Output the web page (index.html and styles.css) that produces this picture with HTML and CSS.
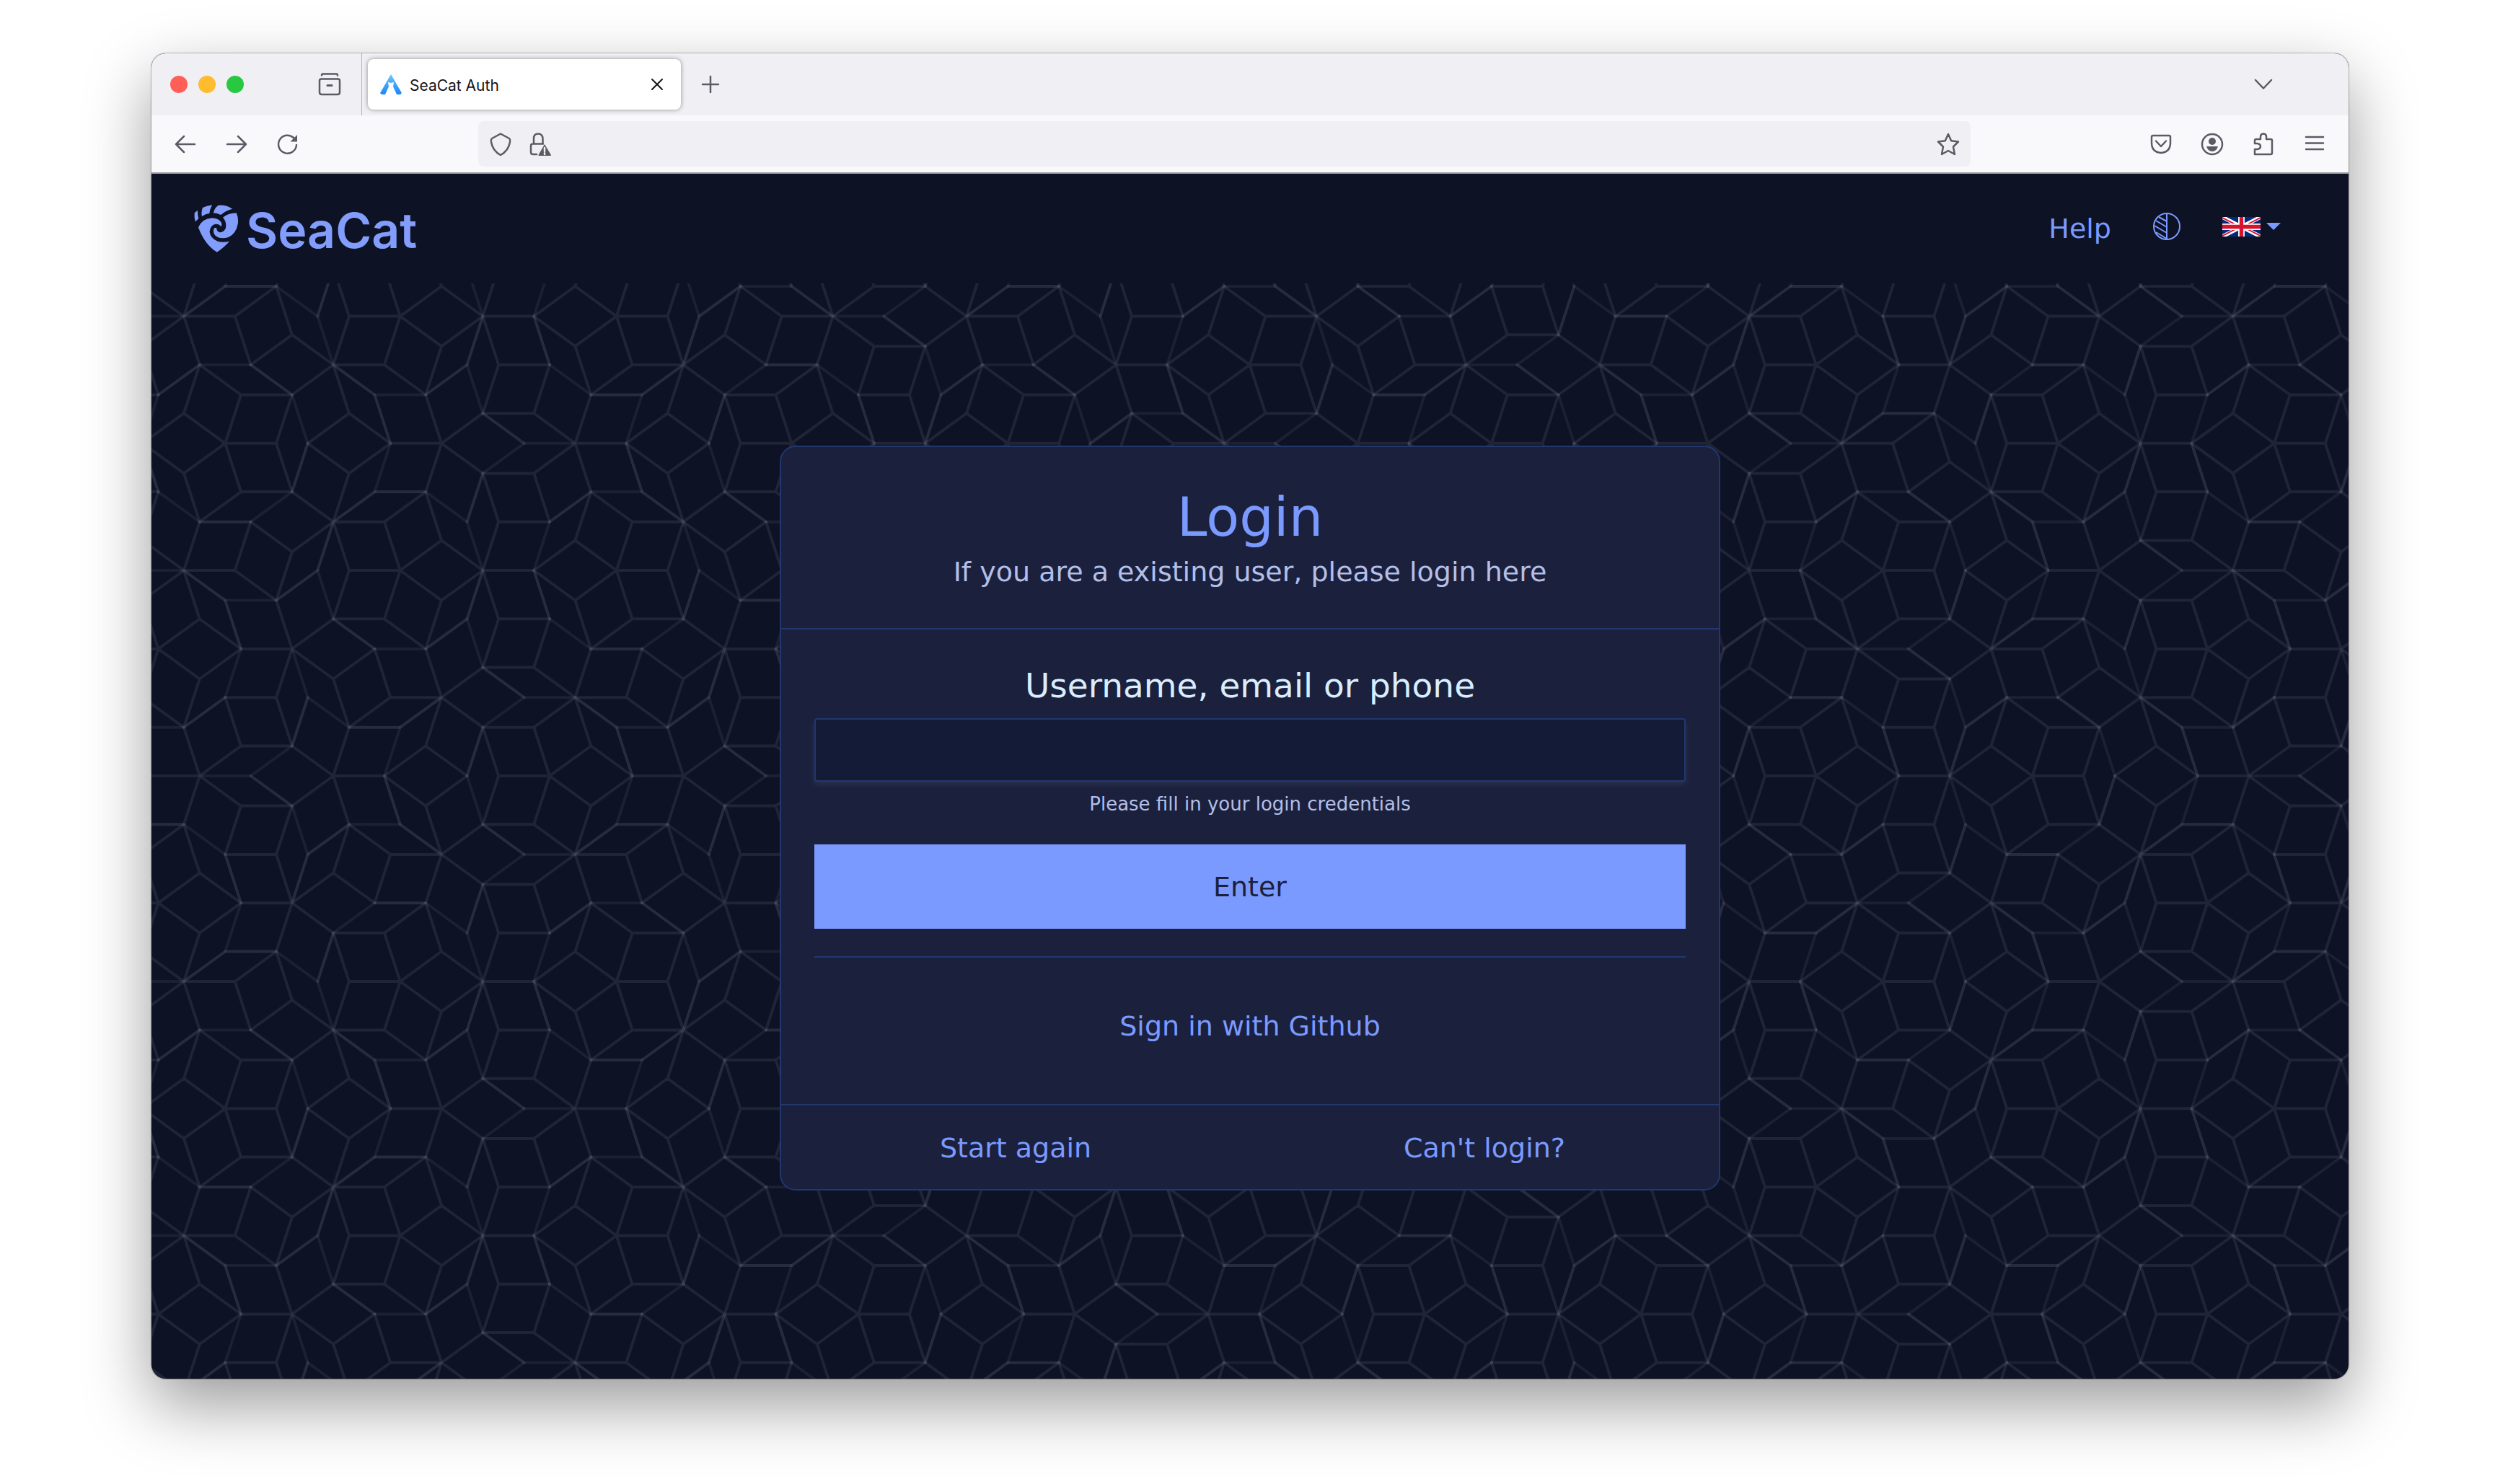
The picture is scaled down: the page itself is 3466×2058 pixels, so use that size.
FILE: index.html
```html
<!DOCTYPE html>
<html lang="en">
<head>
<meta charset="utf-8">
<title>SeaCat Auth</title>
<link rel="stylesheet" href="styles.css">
</head>
<body>
<div class="window">
  <div class="tabbar">
    <div class="lights"><span class="light red"></span><span class="light amber"></span><span class="light green"></span></div>
    <button class="tool view" aria-label="View"><svg class="icon" viewBox="0 0 32 32"><path d="M5 3.500Q5 1.500 7 1.500H25Q27 1.500 27 3.500M2 11Q2 8.500 4.500 8.500H27.500Q30 8.500 30 11V27Q30 30 27 30H5Q2 30 2 27Z"/><path d="M13 17.500H19" stroke-width="3"/></svg></button>
    <div class="tab">
      <svg class="favicon" viewBox="0 0 30 28"><defs><linearGradient id="fav" x1="0" y1="0" x2="0" y2="1"><stop offset="0" stop-color="#6cc6ff"/><stop offset="1" stop-color="#1b86f5"/></linearGradient></defs><path fill="url(#fav)" d="M15 0L30 26L28 28H23L18 17L19 11L15 12L11 11L12 17L7 28H2L0 26Z"/></svg>
      <span class="tab-title">SeaCat Auth</span>
      <button class="tool close" aria-label="Close tab"><svg class="icon dark" viewBox="0 0 32 32"><path d="M9 9L23 23M23 9L9 23"/></svg></button>
    </div>
    <button class="tool add" aria-label="New tab"><svg class="icon" viewBox="0 0 32 32"><path d="M16 5V27M5 16H27"/></svg></button>
    <button class="tool list" aria-label="List tabs"><svg class="icon" viewBox="0 0 32 32"><path d="M5 10L16 21.500L27 10"/></svg></button>
  </div>
  <div class="toolbar">
    <button class="tool" aria-label="Back"><svg class="icon" viewBox="0 0 32 32"><path d="M29 16H3M14 5L3 16L14 27"/></svg></button>
    <button class="tool" aria-label="Forward"><svg class="icon" viewBox="0 0 32 32"><path d="M3 16H29M18 5L29 16L18 27"/></svg></button>
    <button class="tool" aria-label="Reload"><svg class="icon" viewBox="0 0 32 32"><path d="M28 17A12.500 12.500 0 1 1 24 7L27 10"/><path class="solid" d="M29 3V12.500H19.500Z"/></svg></button>
    <div class="address">
      <svg class="icon" viewBox="0 0 32 32"><path d="M16 1.500L28 8Q29.500 9 29 13Q27 25 16 31Q5 25 3 13Q2.500 9 4 8Z"/></svg>
      <svg class="icon" viewBox="0 0 32 32"><path d="M8 15V8Q8 1.500 14 1.500T20.500 8V15M12 30H7Q4 30 4 27V18Q4 15.500 7 15.500H21"/><path class="solid" d="M23 16L32 31Q32 32 31 32H15Q14 32 14.500 31Z"/><path d="M23 21V26M23 28V30" stroke="#f0f0f4"/></svg>
      <svg class="icon star" viewBox="0 0 32 32"><path d="M16 2L20.200 11.300L30 12.500L23 19.500L25 30L16 25L7 30L9 19.500L2 12.500L11.800 11.300Z"/></svg>
    </div>
    <button class="tool" aria-label="Pocket"><svg class="icon" viewBox="0 0 32 32"><path d="M5 4H27Q29 4 29 6V14Q29 27 16 28Q3 27 3 14V6Q3 4 5 4ZM9 11.500L16 19L23 11.500"/></svg></button>
    <button class="tool" aria-label="Account"><svg class="icon" viewBox="0 0 32 32"><circle cx="16" cy="16" r="14"/><circle class="solid" cx="16" cy="12" r="5"/><path class="solid" d="M8 19H24Q22 26 16 26T8 19Z"/></svg></button>
    <button class="tool" aria-label="Extensions"><svg class="icon" viewBox="0 0 32 32"><path d="M4 30V23H7Q12 22.500 12 19T7 15H4V11Q4 9 6 9H12V5Q12.500 1.500 16 1.500T20 5V9H26Q28 9 28 11V28Q28 30 26 30Z"/></svg></button>
    <button class="tool" aria-label="Menu"><svg class="icon" viewBox="0 0 32 32"><path d="M4 6H28M4 14.500H28M4 23H28"/></svg></button>
  </div>
  <div class="page">
    <header class="header">
      <a class="brand" href="#"><svg class="mark" viewBox="57 74 185 199" aria-hidden="true"><path d="M71 97L58 108V128L62 145L75 131Q71 115 71 97ZM132 75Q108 78 92 86Q85 105 89 122Q104 112 120 110Q122 92 132 75ZM137 108Q143 84 158 76Q190 73 217 91Q190 97 168 116Q152 109 137 108ZM177 127Q200 108 233 108Q243 130 239 155Q232 195 200 210Q165 220 145 203Q133 190 140 172Q148 168 150 171Q150 185 163 189Q180 190 188 173Q194 148 177 127ZM74 168Q90 132 130 129Q160 130 170 148Q174 158 169 165Q160 152 145 155Q124 160 121 187Q125 215 155 227Q180 233 204 226Q185 250 152 272Q100 240 74 168Z"/></svg><span class="brand-name">SeaCat</span></a>
      <nav class="nav">
        <a class="help" href="#">Help</a>
        <button class="nav-button" aria-label="Switch theme"><svg class="theme-icon" viewBox="0 0 38 38"><circle cx="19" cy="19" r="18"/><path d="M19 1V37M8 6L19 12M4 11L19 20M2 18L19 28M4 27L19 36"/></svg></button>
        <button class="nav-button" aria-label="Language"><svg class="flag" viewBox="0 0 60 30" preserveAspectRatio="none"><path fill="#012a7d" d="M0 0H60V30H0Z"/><path stroke="#fff" stroke-width="6" d="M0 0L60 30M60 0L0 30"/><path stroke="#d8122f" stroke-width="2" d="M0 1L28 15M60 1L32 15M0 29L28 15M60 29L32 15"/><path stroke="#fff" stroke-width="10" d="M30 0V30M0 15H60"/><path stroke="#d8122f" stroke-width="6" d="M30 0V30M0 15H60"/></svg><span class="caret"></span></button>
      </nav>
    </header>
    <main class="main">
      <svg class="tiling" aria-hidden="true"><path class="edge-soft" id="edge-soft"/><path class="edge-mid" id="edge-mid"/><path class="edge-strong" id="edge-strong"/></svg>
      <form class="card">
        <div class="card-head">
          <h1 class="title">Login</h1>
          <p class="subtitle">If you are a existing user, please login here</p>
        </div>
        <div class="card-body">
          <label class="label" for="user">Username, email or phone</label>
          <input class="field" id="user" type="text" autocomplete="username">
          <p class="hint">Please fill in your login credentials</p>
          <button class="enter" type="button">Enter</button>
          <hr class="rule">
          <a class="link" href="#">Sign in with Github</a>
        </div>
        <div class="card-foot"><a class="link" href="#">Start again</a><a class="link" href="#">Can't login?</a></div>
      </form>
    </main>
  </div>
</div>
<script src="tiling.js"></script>
</body>
</html>
```
FILE: styles.css
```css
* { box-sizing: border-box; }
body { margin: 0; padding: 74px 210px 146px; background: #fff; font-family: Verdana, "DejaVu Sans", sans-serif; }
button { border: 0; padding: 0; background: none; font: inherit; color: inherit; }
a { text-decoration: none; color: inherit; }

/* Browser window */
.window { border-radius: 20px; overflow: hidden; background: #0d1224; box-shadow: 0 0 1px 1px rgba(0, 0, 0, .25), 0 36px 92px rgba(0, 0, 0, .4); }
.tabbar { display: flex; align-items: center; height: 86px; padding: 0 100px 0 26px; background: #f0eff4; }
.lights { display: flex; gap: 15px; }
.light { width: 24px; height: 24px; border-radius: 50%; }
.red { background: #ff5f57; }
.amber { background: #febc2e; }
.green { background: #28c840; }
.tool { display: flex; flex: none; align-items: center; justify-content: center; width: 36px; height: 36px; }
.icon { width: 32px; height: 32px; fill: none; stroke: #5b5b66; stroke-width: 2.500; stroke-linecap: round; stroke-linejoin: round; }
.icon .solid { fill: #5b5b66; stroke: none; }
.dark { stroke: #15141a; stroke-width: 2; }
.view { margin-left: 101px; }
.tabbar::before { content: ""; order: 1; align-self: stretch; width: 1px; margin-left: 26px; background: #b4b4ba; }
.tab { order: 2; display: flex; align-items: center; width: 434px; height: 70px; margin-left: 8px; padding: 0 15px 0 17px; border-radius: 8px; background: #fff; box-shadow: 0 0 6px rgba(0, 0, 0, .4); }
.favicon { width: 30px; height: 28px; }
.tab-title { margin-left: 11px; padding-top: 4px; font: 21px/30px Inter, sans-serif; color: #15141a; }
.close { margin-left: auto; }
.add { order: 3; margin-left: 23px; }
.list { order: 4; margin-left: auto; }
.toolbar { display: flex; align-items: center; height: 81px; padding: 0 29px; gap: 35px; background: #f9f9fb; border-bottom: 2px solid #9a9ca0; }
.address { display: flex; flex: 1; align-items: center; height: 63px; margin: 0 211px; padding: 0 15px; gap: 22px; border-radius: 8px; background: #f0f0f4; }
.star { margin-left: auto; }

/* Page header */
.header { display: flex; align-items: center; justify-content: space-between; height: 152px; padding: 0 94px 0 59px; color: #7b9aff; }
.brand { display: flex; align-items: center; gap: 10px; }
.mark { width: 62px; height: 66px; fill: #829dfb; }
.brand-name { padding-top: 4px; font: 600 68px/80px Inter, sans-serif; color: #829dfb; }
.nav { display: flex; align-items: center; gap: 58px; font-size: 38px; }
.nav-button { display: flex; align-items: center; gap: 8px; padding-bottom: 6px; }
.theme-icon { width: 38px; height: 38px; fill: none; stroke: #7b9aff; stroke-width: 2; }
.flag { width: 53px; height: 27px; }
.caret { border: 10px solid transparent; border-top-color: #7b9aff; border-bottom: 0; }

/* Backdrop */
.main { position: relative; display: flex; justify-content: center; padding: 225px 20px 261px; }
.tiling { position: absolute; inset: 0; width: 100%; height: 100%; fill: none; stroke: #dde4f4; stroke-width: 4; stroke-linecap: round; }
.edge-soft { stroke-opacity: .07; }
.edge-mid { stroke-opacity: .09; }
.edge-strong { stroke-opacity: .12; }

/* Login card */
.card { position: relative; width: 1304px; border: 2px solid #22366f; border-radius: 22px; background: #1b213d; color: #7b9aff; text-align: center; }
.card-head { height: 253px; padding-top: 49px; border-bottom: 2px solid #22366f; }
.title { margin: 0; font-size: 75px; line-height: 96px; font-weight: 400; }
.subtitle { margin: 0; font-size: 38px; line-height: 56px; color: #b3bfe8; }
.card-body { display: flex; flex-direction: column; padding: 48px 46px 80px; }
.label { font-size: 47px; line-height: 60px; color: #d9edff; }
.field { height: 88px; margin-top: 15px; padding: 0 24px; border: 2px solid #22366f; border-radius: 4px; background: #141b36; color: #d9edff; font: 38px Verdana, "DejaVu Sans", sans-serif; box-shadow: 0 4px 8px rgba(255, 255, 255, .08); }
.hint { margin: 13px 0 0; font-size: 26px; line-height: 36px; color: #b3bfe8; }
.enter { height: 117px; margin-top: 38px; font-size: 38px; background: #7b9aff; color: #1b213d; }
.rule { width: 100%; margin: 38px 0 67px; border: 0; border-top: 2px solid #22366f; }
.link { font-size: 38px; line-height: 56px; }
.card-foot { display: grid; grid-template-columns: 1fr 1fr; padding: 31px 0 29px; border-top: 2px solid #22366f; }
```
FILE: tiling.js
```js
// Penrose rhombus backdrop, built by cut and project from the 5D integer lattice.
const EDGE = 71;
const SCALE = { x: 70.8, y: 70.76 };
const ORIGIN = { x: 44.9, y: 45.6 };
const SHIFT = [0.3627, -0.3132, -0.5];
const TURN = 2 * Math.PI / 5;
const axes = [0, 1, 2, 3, 4];
const real = axes.map(j => [Math.cos(TURN * j), Math.sin(TURN * j)]);
const perp = axes.map(j => [Math.cos(2 * TURN * j), Math.sin(2 * TURN * j), 1]);
const dot = (k, basis, d) => k.reduce((sum, v, j) => sum + v * basis[j][d], 0);

// Face normals and half widths of the acceptance window (the projected unit cube).
const faces = [];
for (let i = 0; i < 5; i++) {
  for (let j = i + 1; j < 5; j++) {
    const a = perp[i], b = perp[j];
    const n = [a[1] * b[2] - a[2] * b[1], a[2] * b[0] - a[0] * b[2], a[0] * b[1] - a[1] * b[0]];
    const half = perp.reduce((s, g) => s + Math.abs(n[0] * g[0] + n[1] * g[1] + n[2] * g[2]) / 2, 0);
    faces.push([n, half]);
  }
}
function accepted(k) {
  const q = SHIFT.map((s, d) => s + dot(k, perp, d));
  return faces.every(([n, half]) => Math.abs(n[0] * q[0] + n[1] * q[1] + n[2] * q[2]) <= half + 1e-6);
}
const place = k => [ORIGIN.x + SCALE.x * dot(k, real, 0), ORIGIN.y + SCALE.y * dot(k, real, 1)];
const step = (k, j, s) => k.map((v, i) => i === j ? v + s : v);
const level = k => k.reduce((a, b) => a + b, 0);

function draw() {
  const area = document.querySelector('.tiling').getBoundingClientRect();
  const pad = EDGE * 2;
  const start = [0, 0, 0, 0, 0];
  const nodes = new Map([[start.join(), start]]);
  const stack = [start];
  while (stack.length) {
    const k = stack.pop();
    for (const j of axes) for (const s of [1, -1]) {
      const next = step(k, j, s), key = next.join();
      if (nodes.has(key) || !accepted(next)) continue;
      const [x, y] = place(next);
      if (x < -pad || y < -pad || x > area.width + pad || y > area.height + pad) continue;
      nodes.set(key, next);
      stack.push(next);
    }
  }

  // Thin rhombi have one strong and one soft edge at their outer obtuse corner.
  const tone = new Map();
  const edgeKey = (k, j, s) => (s > 0 ? k : step(k, j, -1)).join() + ':' + j;
  for (const k of nodes.values()) {
    const s = level(k) === -1 ? 1 : level(k) === 2 ? -1 : 0;
    if (!s) continue;
    for (const i of axes) {
      const j = (i + 2) % 5;
      const a = step(k, i, s), b = step(k, j, s), c = step(a, j, s);
      if (![a, b, c].every(m => nodes.has(m.join()))) continue;
      const cross = real[i][0] * real[j][1] - real[i][1] * real[j][0];
      tone.set(edgeKey(k, cross > 0 ? i : j, s), 'edge-strong');
      tone.set(edgeKey(k, cross > 0 ? j : i, s), 'edge-soft');
    }
  }

  const paths = { 'edge-soft': '', 'edge-mid': '', 'edge-strong': '' };
  for (const k of nodes.values()) {
    const a = place(k);
    for (const j of axes) {
      const next = step(k, j, 1);
      if (!nodes.has(next.join())) continue;
      const b = place(next);
      paths[tone.get(edgeKey(k, j, 1)) || 'edge-mid'] += `M${a[0].toFixed(1)} ${a[1].toFixed(1)}L${b[0].toFixed(1)} ${b[1].toFixed(1)}`;
    }
  }
  for (const id in paths) document.getElementById(id).setAttribute('d', paths[id]);
}
draw();
addEventListener('resize', draw);
```
